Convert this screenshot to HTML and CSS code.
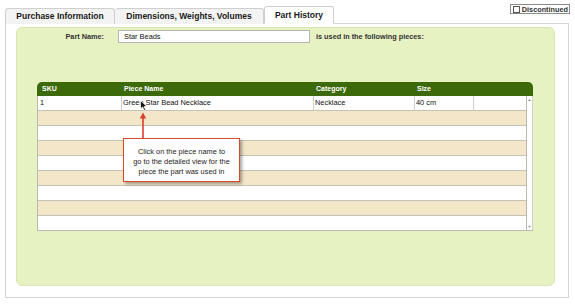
FILE: index.html
```html
<!DOCTYPE html>
<html lang="en">
<head>
  <meta charset="UTF-8">
  <meta name="viewport" content="width=device-width, initial-scale=1.0">
  <title>Part History</title>
  <link rel="stylesheet" href="styles.css">
</head>
<body>
  <div class="page">
    <div class="tabbar">
      <div class="tabs">
        <div class="tab tab-purchase">Purchase Information</div>
        <div class="tab tab-dims">Dimensions, Weights, Volumes</div>
        <div class="tab tab-history active">Part History</div>
      </div>
      <label class="discontinued"><span class="check"></span>Discontinued</label>
    </div>
    <div class="panel">
      <div class="green">
        <div class="name-row">
          <span class="name-label">Part Name:</span>
          <span class="name-input">Star Beads</span>
          <span class="name-note">is used in the following pieces:</span>
        </div>
        <div class="pieces">
          <div class="cols head">
            <span>SKU</span>
            <span>Piece Name</span>
            <span>Category</span>
            <span>Size</span>
            <span></span>
          </div>
          <div class="body">
            <div class="rows">
              <div class="cols row first">
                <span>1</span>
                <span>Green Star Bead Necklace</span>
                <span>Necklace</span>
                <span>40 cm</span>
                <span></span>
              </div>
              <div class="row tan"></div>
              <div class="row"></div>
              <div class="row tan"></div>
              <div class="row"></div>
              <div class="row tan"></div>
              <div class="row"></div>
              <div class="row tan"></div>
              <div class="row last"></div>
            </div>
            <div class="scrollbar">
              <span class="arrow">&#9650;</span>
              <span class="arrow">&#9660;</span>
            </div>
          </div>

          <!-- cursor + annotation drawn over the table -->
          <svg class="cursor" width="8" height="11" viewBox="0 0 8 11">
            <path d="M0.5 0.5 L0.5 9 L2.6 7 L4.2 10.5 L5.6 9.8 L4.1 6.5 L7 6.5 Z" fill="#111" stroke="#fff" stroke-width="0.8"/>
          </svg>
          <svg class="pointer" width="8" height="27" viewBox="0 0 8 27">
            <path d="M4 27 L4 5" stroke="#d9412b" stroke-width="1.6"/>
            <path d="M0.8 6.5 L4 0.5 L7.2 6.5 Z" fill="#d9412b"/>
          </svg>
          <div class="callout">Click on the piece name to<br>go to the detailed view for the<br>piece the part was used in</div>
        </div>
      </div>
    </div>
  </div>
</body>
</html>
```

FILE: styles.css
```css
body {
  margin: 0;
  font-family: "Liberation Sans", Arial, sans-serif;
  color: #222;
  background: #fff;
}
.page {
  width: 564px;
  margin-left: 5px;
}
.tabbar {
  display: flex;
  justify-content: space-between;
  height: 24px;
  margin-bottom: -1px;
  position: relative;
  z-index: 1;
}
.tabs {
  display: flex;
  align-items: flex-end;
}
.tab {
  box-sizing: border-box;
  height: 16px;
  border: 1px solid #cfcfcf;
  border-bottom: none;
  border-radius: 3px 3px 0 0;
  background: #f3f3f3;
  font-size: 8.5px;
  font-weight: bold;
  text-align: center;
  line-height: 15px;
  color: #1a1a1a;
}
.tab-purchase { width: 110px; }
.tab-dims { width: 149px; border-left: none; }
.tab-history { width: 70px; }
.tab.active {
  height: 18px;
  background: #fff;
  line-height: 17px;
  border-bottom: 1px solid #fff;
}
.discontinued {
  display: flex;
  align-items: center;
  gap: 2px;
  box-sizing: border-box;
  height: 10px;
  margin-top: 4px;
  margin-right: -1px;
  padding: 0 1px 0 2px;
  border: 1px solid #8a8a8a;
  font-size: 7.3px;
  font-weight: bold;
  color: #333;
}
.check {
  box-sizing: border-box;
  width: 7px;
  height: 7px;
  border: 1px solid #555;
  background: #fff;
}
.panel {
  border: 1px solid #d3d3d3;
  padding: 3px 13px 11px 10px;
}
.green {
  height: 257px;
  background: #e6f2c1;
  border: 1px solid #d9e8b2;
  border-radius: 6px;
}
.name-row {
  display: flex;
  align-items: center;
  margin-top: 2px;
  font-size: 7.3px;
  font-weight: bold;
  color: #333;
}
.name-label {
  width: 87px;
  text-align: right;
}
.name-input {
  box-sizing: border-box;
  width: 192px;
  height: 13px;
  margin-left: 14px;
  padding-left: 5px;
  border: 1px solid #b5b5b5;
  background: #fff;
  font-weight: normal;
  font-size: 7.4px;
  line-height: 11px;
  color: #111;
}
.name-note {
  margin-left: 6px;
}
.pieces {
  position: relative;
  width: 496px;
  margin: 39px 0 0 20px;
}
.cols {
  display: grid;
  grid-template-columns: 83px 192px 101px 59px 1fr;
}
.head {
  height: 14px;
  background: #3c6a0b;
  border-radius: 5px 5px 0 0;
  color: #fff;
  font-size: 7px;
  font-weight: bold;
  line-height: 14px;
}
.head span {
  padding-left: 4px;
}
.head span:first-child {
  padding-left: 5px;
}
.body {
  display: flex;
  border-left: 1px solid #b9b9b0;
  border-bottom: 1px solid #b9b9b0;
}
.rows {
  flex: 1;
}
.row {
  box-sizing: border-box;
  height: 15px;
  border-bottom: 1px solid #c3c2b5;
  background: #fff;
}
.row.tan {
  background: #f4e6c9;
}
.row.last {
  border-bottom: none;
  height: 14px;
}
.row.first {
  font-size: 7.4px;
  line-height: 14px;
  color: #111;
}
.row.first span {
  padding-left: 1px;
  border-left: 1px solid #cfcfcf;
}
.row.first span:first-child {
  border-left: none;
  padding-left: 2px;
}
.scrollbar {
  display: flex;
  flex-direction: column;
  justify-content: space-between;
  box-sizing: border-box;
  width: 7px;
  border-left: 1px solid #b9b9b0;
  border-right: 1px solid #d0d0d0;
  background: #fff;
}
.arrow {
  font-size: 4px;
  line-height: 7px;
  text-align: center;
  color: #888;
}
.cursor {
  position: absolute;
  left: 103px;
  top: 18px;
}
.pointer {
  position: absolute;
  left: 102px;
  top: 30px;
}
.callout {
  position: absolute;
  left: 86px;
  top: 56px;
  box-sizing: border-box;
  width: 117px;
  height: 44px;
  padding: 8px 0 0;
  border: 1.5px solid #d64a2c;
  background: #fff;
  box-shadow: 2px 2px 3px rgba(0, 0, 0, 0.35);
  font-size: 7.4px;
  line-height: 10px;
  text-align: center;
  white-space: nowrap;
  color: #222;
}
```
